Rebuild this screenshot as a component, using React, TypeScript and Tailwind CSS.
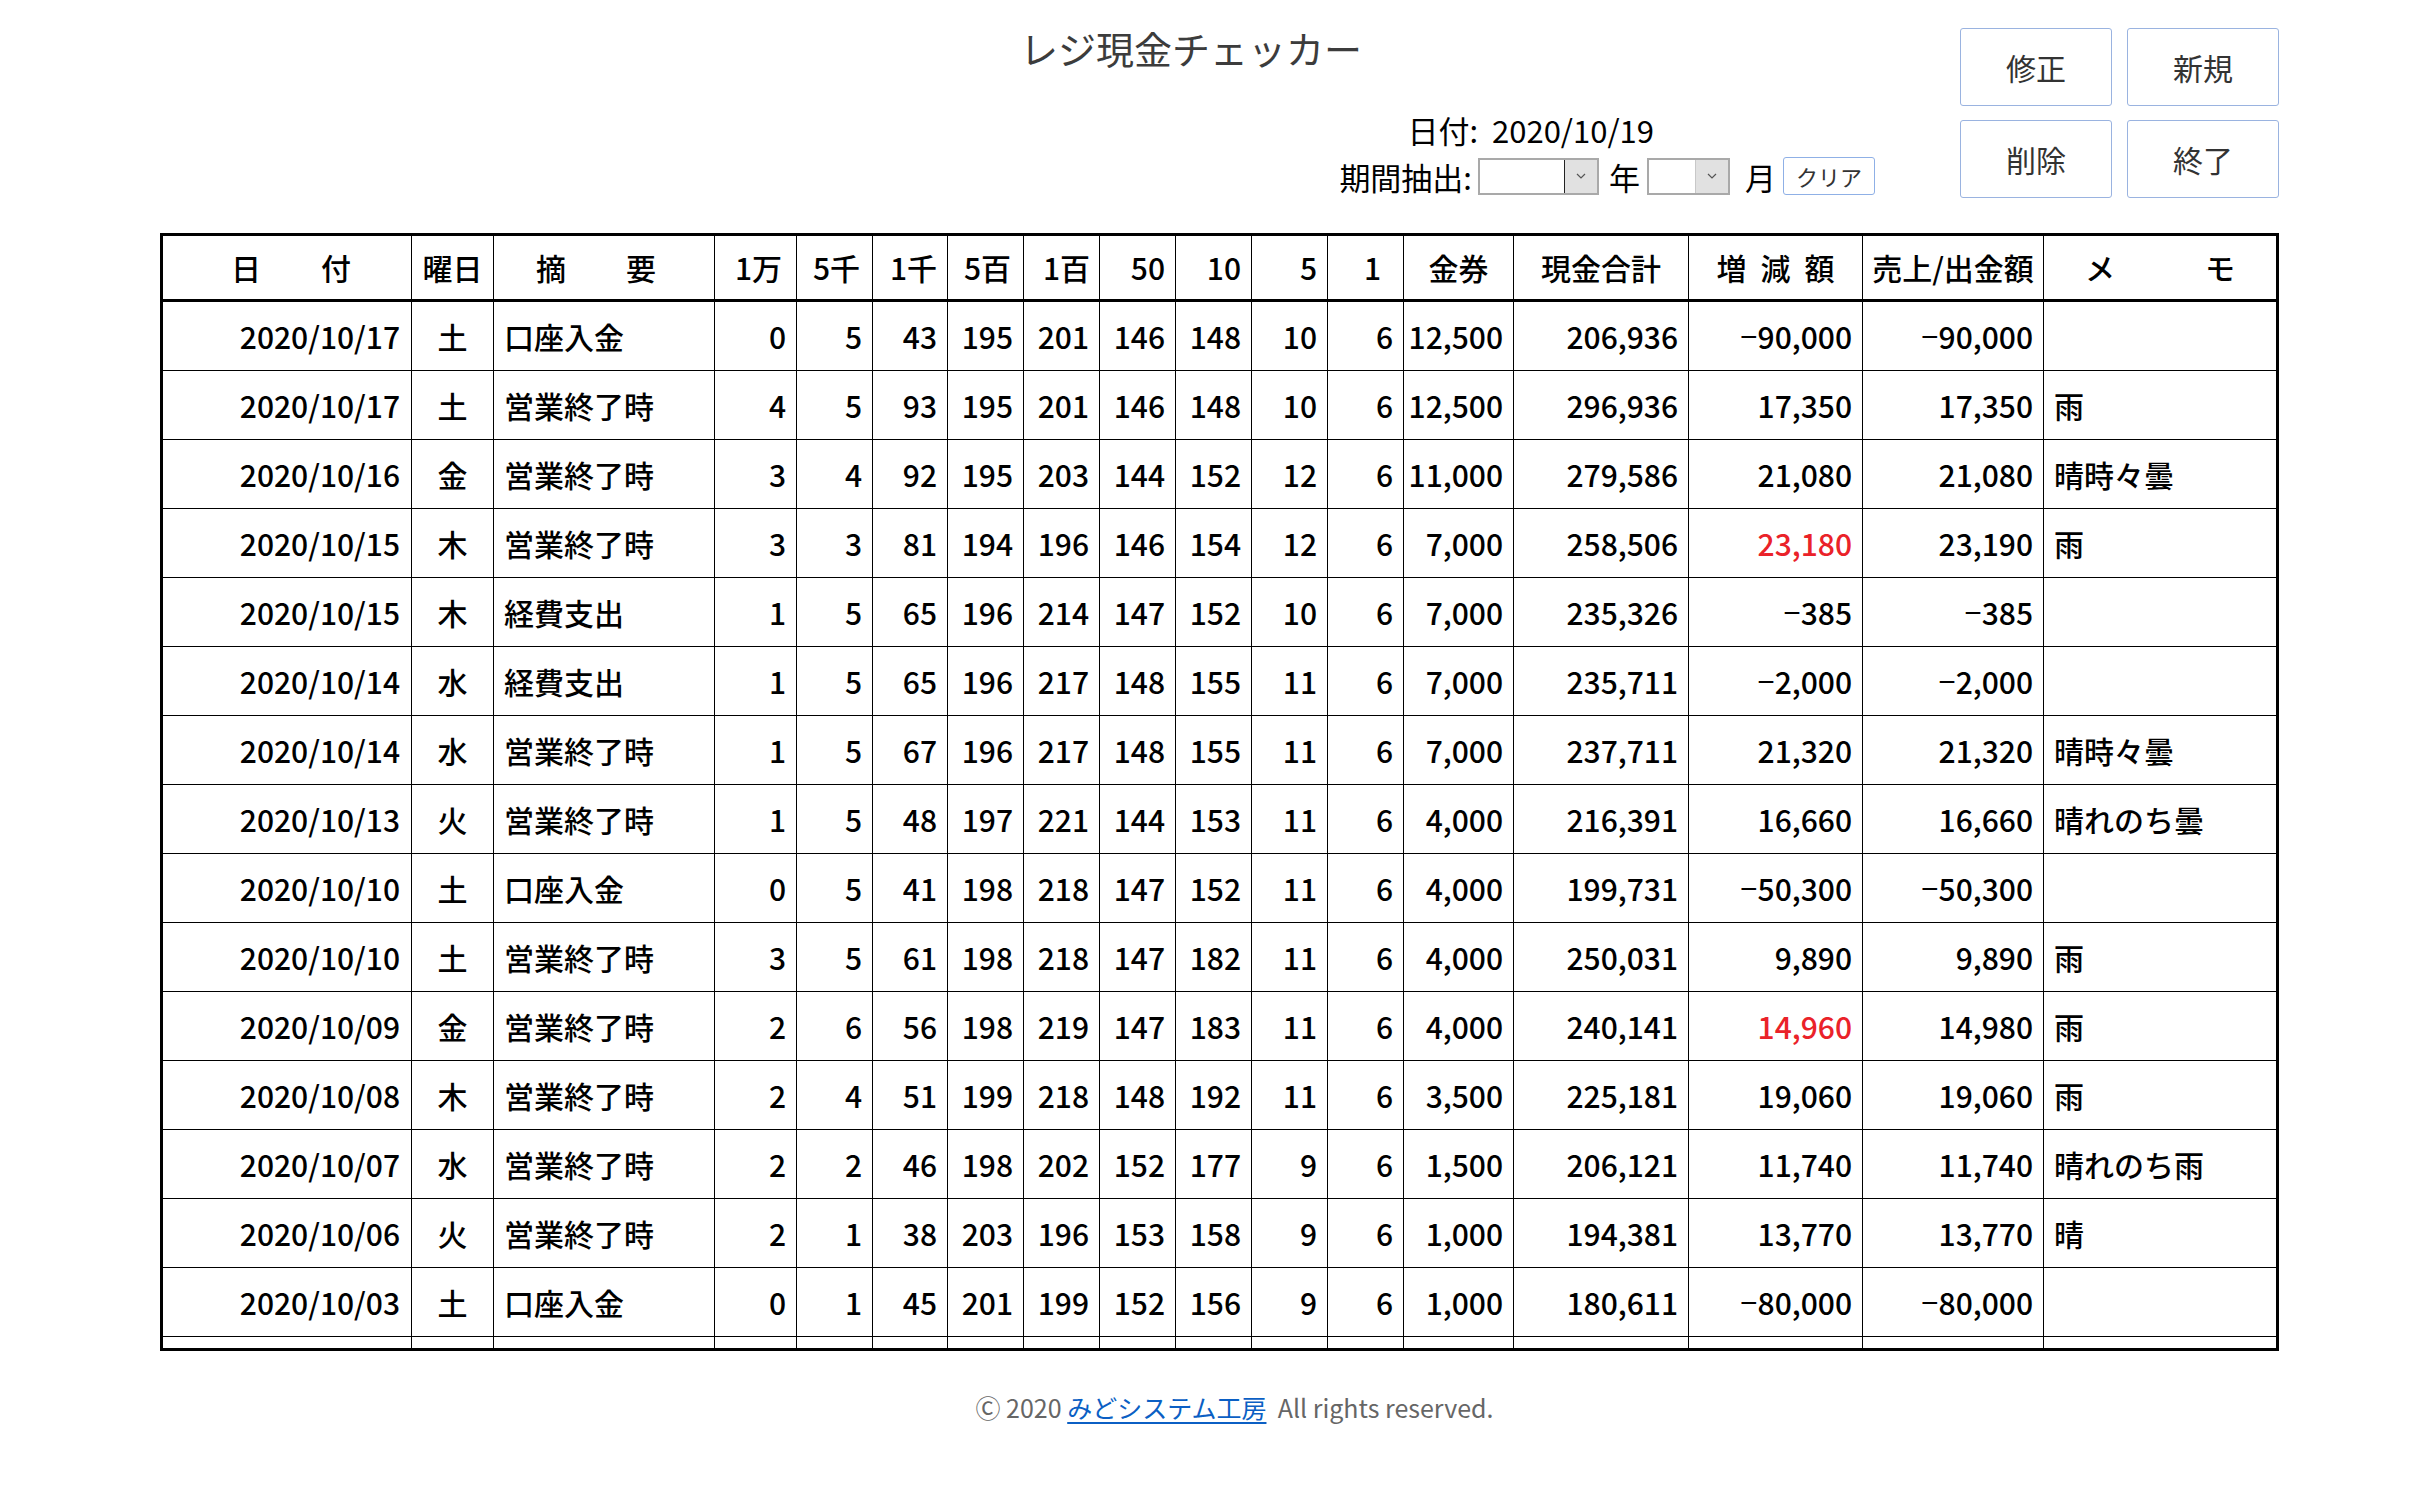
import React from "react";

type Row = {
  date: string;
  dow: string;
  desc: string;
  counts: number[];
  ken: string;
  total: string;
  diff: string;
  red?: boolean;
  sales: string;
  memo: string;
};

const rows: Row[] = [
  { date: "2020/10/17", dow: "土", desc: "口座入金", counts: [0, 5, 43, 195, 201, 146, 148, 10, 6], ken: "12,500", total: "206,936", diff: "-90,000", sales: "-90,000", memo: "" },
  { date: "2020/10/17", dow: "土", desc: "営業終了時", counts: [4, 5, 93, 195, 201, 146, 148, 10, 6], ken: "12,500", total: "296,936", diff: "17,350", sales: "17,350", memo: "雨" },
  { date: "2020/10/16", dow: "金", desc: "営業終了時", counts: [3, 4, 92, 195, 203, 144, 152, 12, 6], ken: "11,000", total: "279,586", diff: "21,080", sales: "21,080", memo: "晴時々曇" },
  { date: "2020/10/15", dow: "木", desc: "営業終了時", counts: [3, 3, 81, 194, 196, 146, 154, 12, 6], ken: "7,000", total: "258,506", diff: "23,180", red: true, sales: "23,190", memo: "雨" },
  { date: "2020/10/15", dow: "木", desc: "経費支出", counts: [1, 5, 65, 196, 214, 147, 152, 10, 6], ken: "7,000", total: "235,326", diff: "-385", sales: "-385", memo: "" },
  { date: "2020/10/14", dow: "水", desc: "経費支出", counts: [1, 5, 65, 196, 217, 148, 155, 11, 6], ken: "7,000", total: "235,711", diff: "-2,000", sales: "-2,000", memo: "" },
  { date: "2020/10/14", dow: "水", desc: "営業終了時", counts: [1, 5, 67, 196, 217, 148, 155, 11, 6], ken: "7,000", total: "237,711", diff: "21,320", sales: "21,320", memo: "晴時々曇" },
  { date: "2020/10/13", dow: "火", desc: "営業終了時", counts: [1, 5, 48, 197, 221, 144, 153, 11, 6], ken: "4,000", total: "216,391", diff: "16,660", sales: "16,660", memo: "晴れのち曇" },
  { date: "2020/10/10", dow: "土", desc: "口座入金", counts: [0, 5, 41, 198, 218, 147, 152, 11, 6], ken: "4,000", total: "199,731", diff: "-50,300", sales: "-50,300", memo: "" },
  { date: "2020/10/10", dow: "土", desc: "営業終了時", counts: [3, 5, 61, 198, 218, 147, 182, 11, 6], ken: "4,000", total: "250,031", diff: "9,890", sales: "9,890", memo: "雨" },
  { date: "2020/10/09", dow: "金", desc: "営業終了時", counts: [2, 6, 56, 198, 219, 147, 183, 11, 6], ken: "4,000", total: "240,141", diff: "14,960", red: true, sales: "14,980", memo: "雨" },
  { date: "2020/10/08", dow: "木", desc: "営業終了時", counts: [2, 4, 51, 199, 218, 148, 192, 11, 6], ken: "3,500", total: "225,181", diff: "19,060", sales: "19,060", memo: "雨" },
  { date: "2020/10/07", dow: "水", desc: "営業終了時", counts: [2, 2, 46, 198, 202, 152, 177, 9, 6], ken: "1,500", total: "206,121", diff: "11,740", sales: "11,740", memo: "晴れのち雨" },
  { date: "2020/10/06", dow: "火", desc: "営業終了時", counts: [2, 1, 38, 203, 196, 153, 158, 9, 6], ken: "1,000", total: "194,381", diff: "13,770", sales: "13,770", memo: "晴" },
  { date: "2020/10/03", dow: "土", desc: "口座入金", counts: [0, 1, 45, 201, 199, 152, 156, 9, 6], ken: "1,000", total: "180,611", diff: "-80,000", sales: "-80,000", memo: "" },
];

const COLS =
  "grid grid-cols-[249px_82px_221px_82px_76px_75px_76px_76px_76px_76px_76px_76px_110px_175px_174px_181px_232px]";

function Num({ v }: { v: string }) {
  // minus sign from a Latin font so it keeps digit width
  if (v.startsWith("-")) {
    return (
      <>
        <span className="font-['Liberation_Sans',sans-serif]">−</span>
        {v.slice(1)}
      </>
    );
  }
  return <>{v}</>;
}

function Chevron() {
  return (
    <svg width="12" height="8" viewBox="0 0 12 8" fill="none">
      <polyline points="2,2 6,6 10,2" stroke="#555" strokeWidth="1.2" />
    </svg>
  );
}

function Select({ width, caret }: { width: string; caret?: boolean }) {
  return (
    <div className={`flex h-[37px] ${width} border-2 border-[#a9a9a9] bg-white`}>
      <div className="flex-1" />
      <div
        className={`flex w-[33px] items-center justify-center bg-[#e1e1e1] ${
          caret ? "border-l border-[#222]" : "border-l border-[#c8c8c8]"
        }`}
      >
        <Chevron />
      </div>
    </div>
  );
}

const headCell = "flex items-center border-r border-black";
const cell = "flex items-center border-r border-black";

export default function App() {
  return (
    <div className="min-h-screen bg-white font-['Noto_Sans_CJK_JP',sans-serif] text-black">
      <div className="ml-[160px] w-[2119px]">
        {/* top area: title, date, filter and buttons */}
        <div className="flex items-start pt-[28px]">
          <div className="flex flex-1 flex-col">
            <div className="pl-[860px] text-[38px] leading-[40px] text-[#3c3c3c]">レジ現金チェッカー</div>
            <div className="mt-[44px] flex justify-end pr-[221px] text-[31px] leading-[36px]">
              <span>日付:</span>
              <span className="ml-[14px]">2020/10/19</span>
            </div>
            <div className="mt-[9px] flex items-center justify-end text-[31px] leading-[37px]">
              <span className="mr-[6px]">期間抽出:</span>
              <Select width="w-[121px]" caret />
              <span className="ml-[10px] mr-[7px]">年</span>
              <Select width="w-[83px]" />
              <span className="ml-[15px] mr-[7px]">月</span>
              <button className="h-[38px] w-[92px] rounded-[3px] border border-[#8fb0e6] bg-white text-[22px] text-[#333]">
                クリア
              </button>
            </div>
          </div>
          <div className="ml-[85px] grid grid-cols-[152px_152px] gap-x-[15px] gap-y-[14px]">
            {["修正", "新規", "削除", "終了"].map((t) => (
              <button
                key={t}
                className="h-[78px] rounded-[3px] border border-[#9ab3e0] bg-white text-[30px] text-[#333]"
              >
                {t}
              </button>
            ))}
          </div>
        </div>

        {/* table */}
        <div className="mt-[35px] border-[3px] border-black text-[30px] font-medium">
          <div className={`${COLS} h-[66px] border-b-[3px] border-black`}>
            <div className={`${headCell} justify-center pl-[8px]`}>日　　付</div>
            <div className={`${headCell} justify-center`}>曜日</div>
            <div className={`${headCell} justify-center pr-[16px]`}>摘　　要</div>
            <div className={`${headCell} justify-end pr-[14px]`}>1万</div>
            <div className={`${headCell} justify-end pr-[12px]`}>5千</div>
            <div className={`${headCell} justify-end pr-[10px]`}>1千</div>
            <div className={`${headCell} justify-end pr-[12px]`}>5百</div>
            <div className={`${headCell} justify-end pr-[9px]`}>1百</div>
            <div className={`${headCell} justify-end pr-[10px]`}>50</div>
            <div className={`${headCell} justify-end pr-[10px]`}>10</div>
            <div className={`${headCell} justify-end pr-[10px]`}>5</div>
            <div className={`${headCell} justify-end pr-[22px]`}>1</div>
            <div className={`${headCell} justify-center`}>金券</div>
            <div className={`${headCell} justify-center`}>現金合計</div>
            <div className={`${headCell} justify-center gap-[14px]`}>
              <span>増</span>
              <span>減</span>
              <span>額</span>
            </div>
            <div className={`${headCell} justify-center whitespace-nowrap`}>売上/出金額</div>
            <div className="flex items-center justify-center">メ　　　モ</div>
          </div>

          <div className="h-[1046px] overflow-hidden">
            {rows.map((r, i) => (
              <div key={i} className={`${COLS} h-[69px] border-b border-black`}>
                <div className={`${cell} justify-end pr-[11px]`}>{r.date}</div>
                <div className={`${cell} justify-center`}>{r.dow}</div>
                <div className={`${cell} pl-[10px]`}>{r.desc}</div>
                {r.counts.map((c, j) => (
                  <div key={j} className={`${cell} justify-end pr-[10px]`}>
                    {c}
                  </div>
                ))}
                <div className={`${cell} justify-end pr-[10px]`}>{r.ken}</div>
                <div className={`${cell} justify-end pr-[10px]`}>{r.total}</div>
                <div className={`${cell} justify-end pr-[10px] ${r.red ? "text-[#ea2229]" : ""}`}>
                  <Num v={r.diff} />
                </div>
                <div className={`${cell} justify-end pr-[10px]`}>
                  <Num v={r.sales} />
                </div>
                <div className="flex items-center pl-[10px]">{r.memo}</div>
              </div>
            ))}
            <div className={`${COLS} h-[69px] border-b border-black`}>
              {Array.from({ length: 16 }).map((_, j) => (
                <div key={j} className="border-r border-black" />
              ))}
              <div />
            </div>
          </div>
        </div>

        {/* footer */}
        <div className="mt-[40px] flex justify-center pl-[30px] text-[25px] leading-[32px] text-[#666]">
          <span>Ⓒ 2020&nbsp;</span>
          <a href="#" className="text-[#0b5fc4] underline underline-offset-4">
            みどシステム工房
          </a>
          <span>&nbsp;&nbsp;All rights reserved.</span>
        </div>
      </div>
    </div>
  );
}
